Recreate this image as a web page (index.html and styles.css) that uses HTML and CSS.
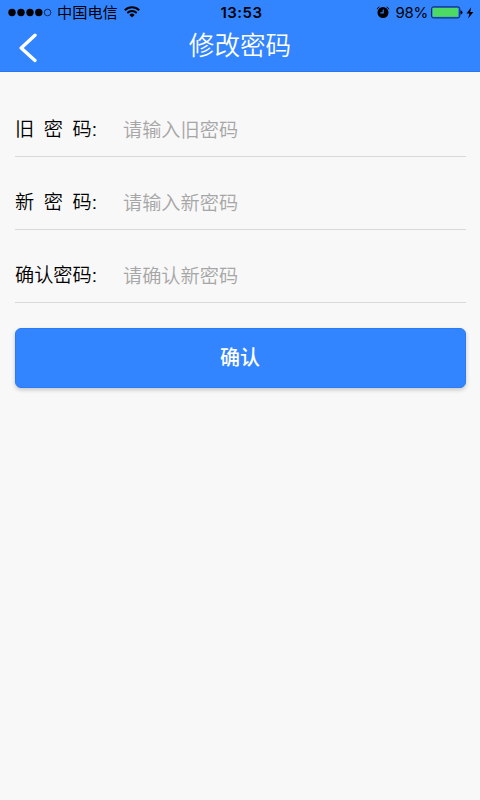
FILE: index.html
```html
<!DOCTYPE html>
<html lang="zh-CN">
<head>
<meta charset="utf-8">
<title>修改密码</title>
<link rel="stylesheet" href="styles.css">
</head>
<body>
<header class="top">
  <div class="status">
    <div class="status-left">
      <svg class="signal" width="44" height="10" viewBox="0 0 44 10"><circle cx="4" cy="4.5" r="3.7"/><circle cx="13" cy="4.5" r="3.7"/><circle cx="22" cy="4.5" r="3.7"/><circle cx="30.8" cy="4.5" r="3.7"/><circle cx="39.6" cy="4.5" r="3.3" fill="none" stroke="#06152c" stroke-width=".8"/></svg>
      <span class="carrier">中国电信</span>
      <svg class="wifi" width="16" height="12" viewBox="0 0 16 12" fill="none" stroke="#000" stroke-width="1.9"><path d="M.8 4.2a10.3 10.3 0 0 1 14.4 0M3.3 7a6.7 6.7 0 0 1 9.4 0"/><path d="M8 11.6 5.4 8.9a3.7 3.7 0 0 1 5.2 0z" fill="#000" stroke="none"/></svg>
    </div>
    <span class="time">13:53</span>
    <div class="status-right">
      <svg class="alarm" width="14" height="13" viewBox="0 0 14 13"><circle cx="7" cy="6.5" r="5.5"/><path d="M1.1 3.2Q1.6 1.4 3.4.9M10.6.9q1.8.5 2.3 2.3" fill="none" stroke="#000" stroke-width="1"/><path d="M7.2 3.4v3.5H4.4" fill="none" stroke="#3385ff" stroke-width="1.1"/></svg>
      <span class="percent">98%</span>
      <svg class="battery" width="32" height="13" viewBox="0 0 32 13"><rect x=".6" y=".9" width="28.2" height="11" rx="1.8" fill="#3385ff" stroke="#08234c"/><rect x="1.7" y="2" width="25.3" height="8.8" rx=".7" fill="#4cd964"/><path d="M29.5 4.2q2 .5 2 2.2t-2 2.2z"/></svg>
      <svg class="bolt" width="8" height="12" viewBox="0 0 8 12"><path d="M5.2.3.5 6.5h2.9L2.2 11.5 7.4 5H4.2z"/></svg>
    </div>
  </div>
  <div class="nav">
    <svg class="back" width="20" height="30" viewBox="0 0 20 30"><path d="M17 2.2 3.2 15 17 27.4" fill="none" stroke="#fff" stroke-width="3.4" stroke-linecap="round" stroke-linejoin="round"/></svg>
    <h1 class="title">修改密码</h1>
  </div>
</header>
<form class="form">
  <label class="row"><span class="label spaced">旧 密 码<span class="colon">:</span></span><input class="field" type="password" placeholder="请输入旧密码"></label>
  <label class="row"><span class="label spaced">新 密 码<span class="colon">:</span></span><input class="field" type="password" placeholder="请输入新密码"></label>
  <label class="row"><span class="label">确认密码<span class="colon">:</span></span><input class="field" type="password" placeholder="请确认新密码"></label>
  <button class="submit" type="button">确认</button>
</form>
</body>
</html>
```
FILE: styles.css
```css
* { box-sizing: border-box; }
body {
  margin: 0;
  min-height: 800px;
  background: #f8f8f8;
  color: #000;
  font-family: "Noto Sans CJK SC", sans-serif;
}
svg { display: block; flex: none; }
.top { height: 72px; background: #3385ff; border-bottom: 1px solid #2b78ee; }
.status {
  display: grid;
  grid-template-columns: 1fr auto 1fr;
  align-items: center;
  height: 25px;
  padding: 0 6px 0 8px;
  line-height: 24px;
}
.status-left, .status-right { display: flex; align-items: center; }
.status-right { justify-content: flex-end; }
.carrier { margin: -4px 0 0 5px; font-size: 15.2px; }
.wifi { margin: -2px 0 0 6px; }
.time {
  margin-left: 1px;
  font: 600 15px/24px Inter, sans-serif;
  letter-spacing: .5px;
}
.percent { margin: 0 3px 0 6px; font: 400 15px/24px Inter, sans-serif; letter-spacing: -.3px; }
.alarm { margin: -1px 0 0; }
.bolt { margin-left: 3px; }
.nav {
  display: grid;
  grid-template-columns: 20px 1fr 20px;
  align-items: center;
  height: 46px;
  padding: 0 18px;
}
.title {
  margin: -9px 0 0;
  color: #fff;
  font-size: 25.6px;
  font-weight: 350;
  line-height: 36px;
  text-align: center;
}
.form { padding: 30px 14px 0 15px; }
.row {
  display: flex;
  align-items: center;
  height: 55px;
  margin-bottom: 18px;
  padding-bottom: 2px;
  border-bottom: 1px solid #d9d9d9;
}
.label { width: 108px; font-size: 19.2px; font-weight: 350; line-height: 28px; white-space: nowrap; }
.colon { font-family: "Liberation Sans", sans-serif; line-height: 1; }
.spaced { word-spacing: 5.3px; }
.field {
  flex: 1;
  min-width: 0;
  height: 30px;
  margin-top: 2px;
  padding: 0;
  border: 0;
  outline: 0;
  background: none;
  font: 350 19.2px/28px "Noto Sans CJK SC", sans-serif;
}
.field::placeholder { color: #a6a6a6; opacity: 1; }
.submit {
  display: block;
  width: 100%;
  height: 60px;
  margin-top: 24.5px;
  padding: 0 1px 2px 0;
  border: 1px solid #2a7bf5;
  border-radius: 6px;
  background: #3385ff;
  box-shadow: 0 2px 4px rgba(0, 0, 0, .2);
  color: #fff;
  font: 500 20px/56px "Noto Sans CJK SC", sans-serif;
}
```
